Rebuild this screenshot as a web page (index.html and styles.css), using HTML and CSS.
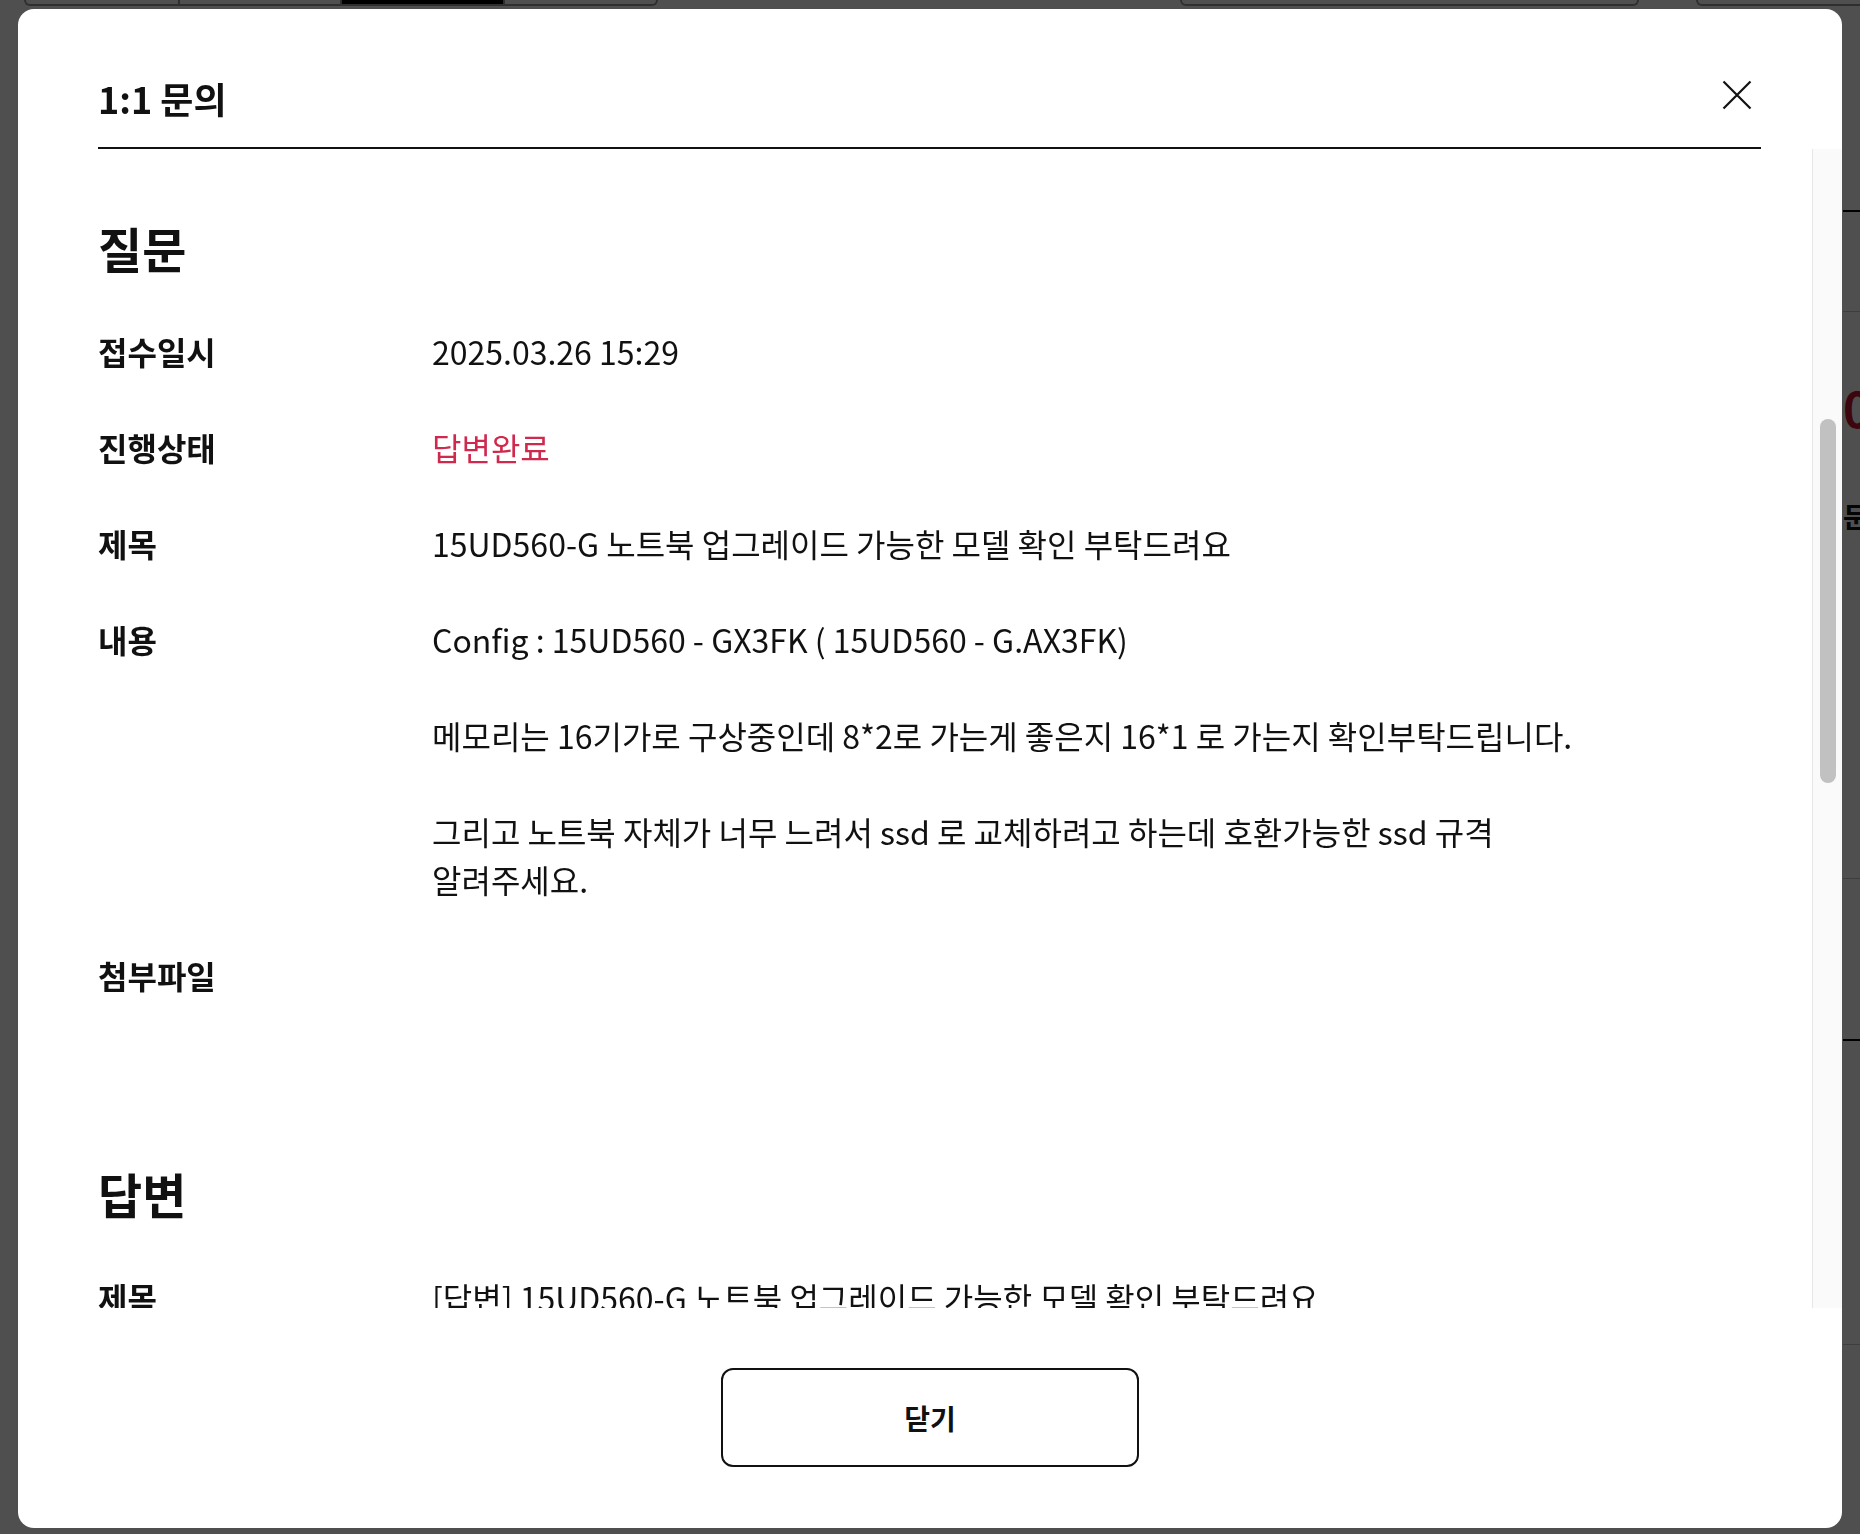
FILE: index.html
```html
<!DOCTYPE html>
<html lang="ko">
<head>
  <meta charset="UTF-8">
  <meta name="viewport" content="width=device-width, initial-scale=1.0">
  <title>1:1 문의</title>
  <link rel="stylesheet" href="styles.css">
</head>
<body>
  <!-- page behind the popup -->
  <div class="page">
    <div class="tabs">
      <div class="tab-group first">
        <span class="tab w1"></span>
        <span class="tab w2"></span>
        <span class="tab w3 on"></span>
        <span class="tab w4"></span>
      </div>
      <div class="tab-group second"></div>
      <div class="tab-group third"></div>
    </div>
    <div class="side">
      <div class="side-line dark"></div>
      <div class="side-line gap1"></div>
      <p class="side-num">0</p>
      <p class="side-txt">문의</p>
      <div class="side-line gap2"></div>
      <div class="side-line dark gap3"></div>
      <div class="side-line gap4"></div>
    </div>
  </div>

  <div class="dim">
    <div class="modal">
      <div class="modal-head">
        <h1 class="modal-title">1:1 문의</h1>
        <button class="btn-x" type="button" aria-label="닫기">
          <svg width="30" height="30" viewBox="0 0 30 30">
            <path d="M1.5 1.5 L28.5 28.5 M28.5 1.5 L1.5 28.5" stroke="#111" stroke-width="2.2" fill="none"/>
          </svg>
        </button>
      </div>

      <div class="modal-body">
        <div class="scroll-content">
          <section class="qa">
            <h2 class="qa-title">질문</h2>
            <dl class="qa-list">
              <div class="qa-row">
                <dt>접수일시</dt>
                <dd>2025.03.26 15:29</dd>
              </div>
              <div class="qa-row">
                <dt>진행상태</dt>
                <dd class="state">답변완료</dd>
              </div>
              <div class="qa-row">
                <dt>제목</dt>
                <dd>15UD560-G 노트북 업그레이드 가능한 모델 확인 부탁드려요</dd>
              </div>
              <div class="qa-row">
                <dt>내용</dt>
                <dd class="qa-text">
                  <p>Config : 15UD560 - GX3FK ( 15UD560 - G.AX3FK)</p>
                  <p>메모리는 16기가로 구상중인데 8*2로 가는게 좋은지 16*1 로 가는지 확인부탁드립니다.</p>
                  <p>그리고 노트북 자체가 너무 느려서 ssd 로 교체하려고 하는데 호환가능한 ssd 규격 알려주세요.</p>
                </dd>
              </div>
              <div class="qa-row">
                <dt>첨부파일</dt>
                <dd></dd>
              </div>
            </dl>
          </section>

          <section class="qa">
            <h2 class="qa-title">답변</h2>
            <dl class="qa-list">
              <div class="qa-row">
                <dt>제목</dt>
                <dd>[답변] 15UD560-G 노트북 업그레이드 가능한 모델 확인 부탁드려요</dd>
              </div>
            </dl>
          </section>
        </div>
        <div class="scrollbar">
          <div class="thumb"></div>
        </div>
      </div>

      <div class="modal-foot">
        <button class="btn-close" type="button">닫기</button>
      </div>
    </div>
  </div>
</body>
</html>
```

FILE: styles.css
```css
* {
  box-sizing: border-box;
}

html, body {
  margin: 0;
  height: 100%;
}

body {
  font-family: "Noto Sans CJK KR", "Noto Sans", sans-serif;
  font-feature-settings: "locl" 0; /* keep the latin colon */
  color: #111;
  background-color: #ffffff;
  overflow: hidden;
}

/* page behind the popup */
.page {
  height: 100%;
  overflow: hidden;
}

.tabs {
  display: flex;
  height: 6px;
  padding-left: 24px;
}

.tab-group {
  display: flex;
  flex: none;
  height: 6px;
  border: 2px solid #999;
  border-top: none;
  border-radius: 0 0 12px 12px;
}

.tab-group.first { width: 634px; }
.tab-group.second { width: 459px; margin-left: 522px; }
.tab-group.third { width: 400px; margin-left: 57px; }

.tab {
  flex: none;
  height: 4px;
  border-right: 2px solid #999;
}

.tab.w1 { width: 154px; }
.tab.w2 { width: 162px; }
.tab.w3 { width: 163px; }
.tab.w4 { flex: 1; border-right: none; }

.tab.on {
  background-color: #000;
}

.side {
  margin-left: 1843px;
  width: 300px;
}

.side-line {
  height: 1px;
  background-color: #c8c8c8;
}

.side-line.dark {
  height: 2px;
  margin-top: 204px;
  background-color: #000;
}

.side-line.gap1 { margin-top: 99px; }
.side-line.gap2 { margin-top: 348px; }
.side-line.dark.gap3 { margin-top: 160px; }
.side-line.gap4 { margin-top: 303px; }

.side-num {
  margin: 71px 0 0;
  font-size: 48px;
  line-height: 48px;
  font-weight: 700;
  color: #c4122f;
}

.side-txt {
  margin: 71px 0 0;
  font-size: 28px;
  line-height: 28px;
  font-weight: 700;
}

/* popup */
.dim {
  position: fixed;
  inset: 0;
  padding: 9px 18px 6px;
  background-color: rgba(0, 0, 0, 0.69);
}

.modal {
  display: flex;
  flex-direction: column;
  height: 100%;
  border-radius: 16px;
  background-color: #ffffff;
  overflow: hidden;
}

.modal-head {
  display: flex;
  align-items: center;
  justify-content: space-between;
  margin: 0 81px 0 80px;
  padding: 65px 0 25px;
  border-bottom: 2px solid #111;
}

.modal-title {
  margin: 0;
  font-size: 36px;
  line-height: 48px;
  font-weight: 700;
}

.btn-x {
  display: flex;
  align-items: center;
  justify-content: center;
  width: 48px;
  height: 48px;
  margin-top: -6px;
  padding: 0;
  border: none;
  background: none;
  cursor: pointer;
}

.modal-body {
  display: flex;
  flex: 1;
  min-height: 0;
}

.scroll-content {
  flex: 1;
  min-width: 0;
  padding: 64px 51px 0 80px;
  overflow: hidden;
}

.scrollbar {
  width: 30px;
  padding-top: 270px;
  border-left: 1px solid #e6e6e6;
  background-color: #fafafa;
}

.thumb {
  width: 16px;
  height: 364px;
  margin: 0 auto;
  border-radius: 8px;
  background-color: #c1c1c1;
}

.qa + .qa {
  margin-top: 160px;
}

.qa-title {
  margin: 0 0 46px;
  font-size: 48px;
  line-height: 68px;
  font-weight: 700;
}

.qa-list {
  display: flex;
  flex-direction: column;
  gap: 48px;
  margin: 0;
}

.qa-row {
  display: flex;
  font-size: 32px;
  line-height: 48px;
}

.qa-row dt {
  flex: none;
  width: 334px;
  font-weight: 700;
}

.qa-row dd {
  margin: 0;
  max-width: 1200px;
  word-break: keep-all;
}

.qa-row dd.state {
  color: #cf2a4e;
}

.qa-text p {
  margin: 0;
}

.qa-text p + p {
  margin-top: 48px;
}

.modal-foot {
  display: flex;
  justify-content: center;
  padding: 60px 0 61px;
}

.btn-close {
  width: 418px;
  height: 99px;
  border: 2px solid #111;
  border-radius: 12px;
  background-color: #ffffff;
  color: #111;
  font-family: inherit;
  font-size: 28px;
  font-weight: 700;
  cursor: pointer;
}
```
